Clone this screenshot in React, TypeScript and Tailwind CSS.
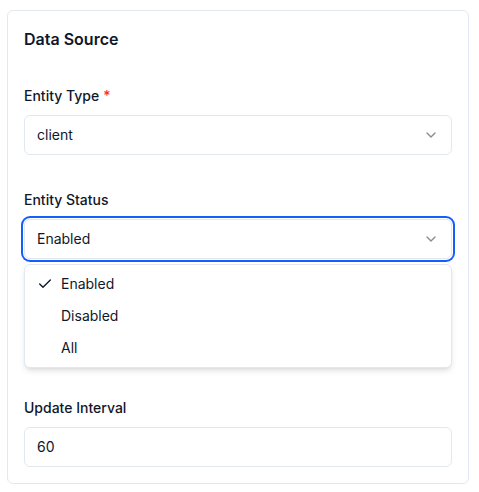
import { Check, ChevronDown } from "lucide-react";

const statusOptions = ["Enabled", "Disabled", "All"];

function Label({ children, required }: { children: React.ReactNode; required?: boolean }) {
    return (
        <label className="block text-sm leading-5 font-medium text-slate-900 mb-[9px]">
            {children}
            {required && <span className="text-red-500 ml-1">*</span>}
        </label>
    );
}

function SelectBox({ value, focused }: { value: string; focused?: boolean }) {
    return (
        <div
            className={
                focused
                    ? "flex h-10 items-center justify-between rounded-md border border-slate-200 bg-white px-3 text-sm text-slate-900 ring-2 ring-blue-600 ring-offset-1"
                    : "flex h-10 items-center justify-between rounded-md border border-slate-200 bg-white px-3 text-sm text-slate-900"
            }
        >
            <span>{value}</span>
            <ChevronDown className="h-4 w-4 text-slate-900 opacity-50" />
        </div>
    );
}

export default function App() {
    const selected = "Enabled";

    return (
        <div className="pt-[10px] pl-[7px]" style={{ fontFamily: "Inter, 'Noto Sans', sans-serif" }}>
            <div className="w-[462px] rounded-md border border-slate-200 bg-white px-4 pt-4 pb-4">
                <h2 className="text-base leading-6 font-semibold text-slate-900">Data Source</h2>

                <div className="mt-[35px]">
                    <Label required>Entity Type</Label>
                    <SelectBox value="client" />
                </div>

                <div className="mt-[35px]">
                    <Label>Entity Status</Label>
                    <SelectBox value={selected} focused />
                    {/* open listbox */}
                    <div className="mt-[5px] rounded-md border border-slate-200 bg-white px-1 py-[3px] shadow-md">
                        {statusOptions.map((opt) => (
                            <div key={opt} className="relative flex h-8 items-center pl-8 pr-2 text-sm text-slate-900">
                                {opt === selected && (
                                    <span className="absolute left-2 flex h-4 w-4 items-center justify-center">
                                        <Check className="h-4 w-4" strokeWidth={2} />
                                    </span>
                                )}
                                {opt}
                            </div>
                        ))}
                    </div>
                </div>

                <div className="mt-[30px]">
                    <Label>Update Interval</Label>
                    <div className="flex h-10 items-center rounded-md border border-slate-200 bg-white px-3 text-sm text-slate-900">
                        60
                    </div>
                </div>
            </div>
        </div>
    );
}
